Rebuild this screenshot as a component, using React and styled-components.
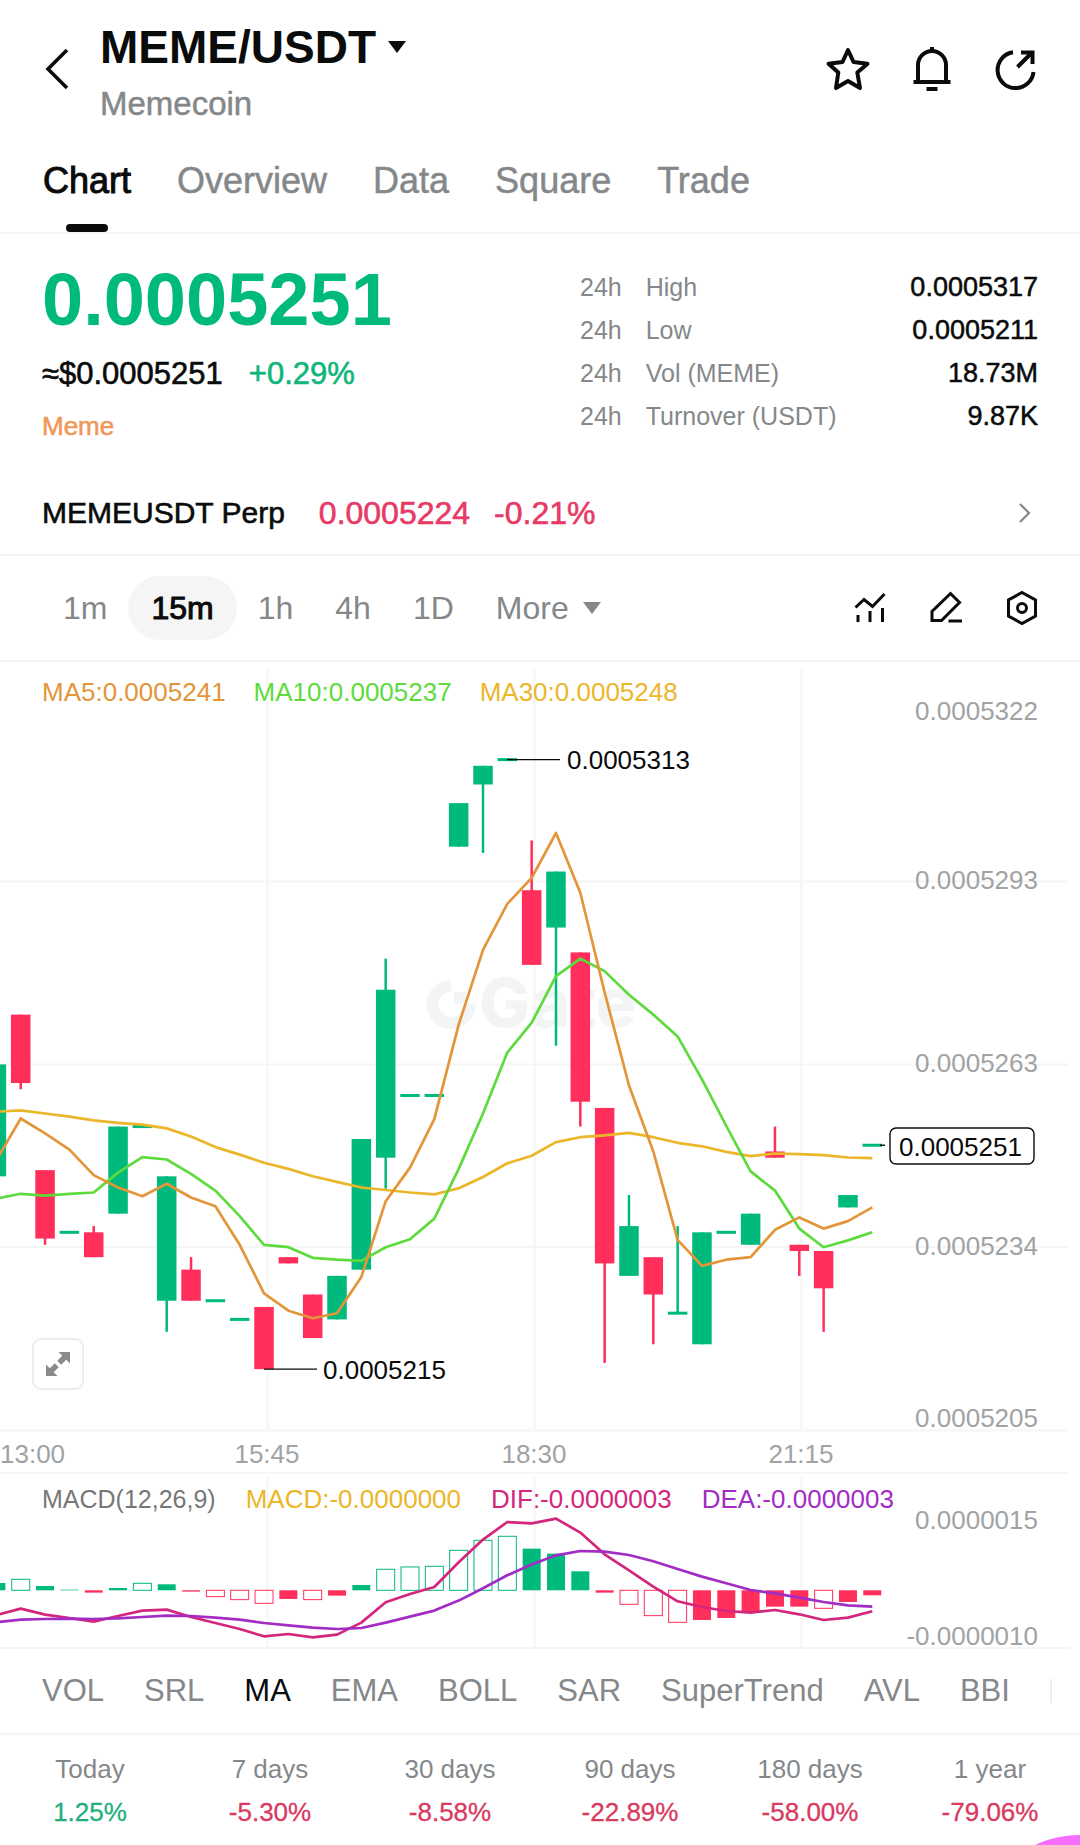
import React, { useState } from "react";
import styled, { createGlobalStyle } from "styled-components";

const GREEN = "#00b97c";
const RED = "#ff2e5b";
const INK = "#0a0b0b";
const GREY = "#84888a";
const AXIS = "#a0a3a5";
const LINE = "#f5f5f5";

const GlobalStyle = createGlobalStyle`
    * {
        box-sizing: border-box;
    }
    body {
        margin: 0;
        background: #fff;
        color: ${INK};
        font-family: "Liberation Sans", Arial, sans-serif;
        overflow-x: hidden;
    }
    button {
        border: 0;
        padding: 0;
        background: none;
        color: inherit;
        font: inherit;
        cursor: pointer;
    }
    svg {
        display: block;
    }
`

const Page = styled.main`
    position: relative;
    min-height: 100vh;
    overflow: hidden;
`

const Header = styled.header`
    display: flex;
    align-items: center;
    justify-content: space-between;
    height: 138px;
    padding: 0 40px 0 42px;
`

const Pair = styled.div`
    display: flex;
    align-items: center;
    gap: 30px;
`

const PairNames = styled.div`
    display: flex;
    flex-direction: column;
    align-items: flex-start;
    gap: 11px;
    padding-top: 7px;
`

const PairButton = styled.button`
    display: flex;
    align-items: center;
    gap: 12px;
    font-size: 46px;
    line-height: 52px;
    font-weight: 700;
`

const CoinName = styled.div`
    font-size: 33px;
    line-height: 40px;
    color: ${GREY};
    -webkit-text-stroke: 0.5px;
`

const Actions = styled.div`
    display: flex;
    align-items: center;
    gap: ${props => props.$gap || "36px"};
`

const TabBar = styled.nav`
    display: flex;
    gap: 46px;
    height: 96px;
    padding: 0 43px;
    border-bottom: 2px solid ${LINE};
`

const Tab = styled.button`
    position: relative;
    padding-bottom: 8px;
    font-size: 36px;
    color: ${props => props.$active ? INK : GREY};
    -webkit-text-stroke: ${props => props.$active ? "1px" : "0.5px"};

    &::after {
        content: "";
        display: ${props => props.$active ? "block" : "none"};
        position: absolute;
        left: 50%;
        bottom: 0;
        width: 42px;
        height: 8px;
        margin-left: -21px;
        border-radius: 4px;
        background: ${INK};
    }
`

const Quote = styled.section`
    display: flex;
    justify-content: space-between;
    padding: 30px 42px 0;
`

const Price = styled.div`
    font-size: 74px;
    line-height: 72px;
    font-weight: 700;
    color: ${GREEN};
`

const PriceSub = styled.div`
    display: flex;
    gap: 26px;
    margin-top: 20px;
    font-size: 31px;
    line-height: 36px;
    -webkit-text-stroke: 0.6px;
`

const Up = styled.span`
    color: #12b57c;
`

const Tag = styled.a`
    display: inline-block;
    margin-top: 18px;
    font-size: 26px;
    line-height: 32px;
    color: #f0985a;
    text-decoration: none;
    -webkit-text-stroke: 0.6px;
`

const Stats = styled.dl`
    width: 458px;
    margin: 2px 0 0;
`

const Stat = styled.div`
    display: flex;
    align-items: center;
    height: 43px;
    font-size: 25px;

    dt {
        display: flex;
        gap: 24px;
        color: ${GREY};
    }
    dd {
        margin: 0 0 0 auto;
        font-size: 27px;
        -webkit-text-stroke: 0.5px;
    }
`

const Perp = styled.a`
    display: flex;
    align-items: center;
    height: 86px;
    margin-top: 28px;
    padding: 2px 48px 0 42px;
    border-bottom: 2px solid ${LINE};
    font-size: 30px;
    color: ${INK};
    text-decoration: none;
    -webkit-text-stroke: 0.6px;

    svg {
        margin-left: auto;
    }
`

const PerpValue = styled.span`
    margin-left: ${props => props.$wide ? "34px" : "24px"};
    font-size: 32px;
    color: #e73a66;
`

const Toolbar = styled.div`
    display: flex;
    align-items: center;
    justify-content: space-between;
    height: 106px;
    padding: 0 42px;
    border-bottom: 2px solid ${LINE};
`

const Intervals = styled.div`
    display: flex;
    align-items: center;
`

const Interval = styled.button`
    display: flex;
    align-items: center;
    gap: 14px;
    height: 64px;
    padding: 0 ${props => props.$active ? "23px" : "21px"};
    border-radius: 32px;
    background: ${props => props.$active ? "#f5f5f5" : "none"};
    font-size: 32px;
    color: ${props => props.$active ? INK : GREY};
    -webkit-text-stroke: ${props => props.$active ? "1px" : "0"};
`

const Panel = styled.section`
    position: relative;

    > svg {
        width: 100%;
        height: auto;
        overflow: visible;
    }
    text {
        font-size: 26px;
    }
`

const Legend = styled.div`
    position: absolute;
    top: ${props => props.$top};
    left: 42px;
    display: flex;
    align-items: center;
    gap: ${props => props.$gap};
    font-size: 26px;
    line-height: 32px;
`

const LegendItem = styled.span`
    color: ${props => props.$color};
    font-size: ${props => props.$small ? "25px" : "26px"};
`

const ExpandButton = styled.button`
    position: absolute;
    left: 32px;
    bottom: 84px;
    display: grid;
    place-items: center;
    width: 52px;
    height: 52px;
    border: 2px solid #ededee;
    border-radius: 9px;
    background: #fff;
`

const IndicatorRow = styled.div`
    border-bottom: 2px solid ${LINE};
`

const IndicatorList = styled.div`
    display: flex;
    align-items: center;
    gap: 40px;
    height: 84px;
    margin-right: 24px;
    padding-left: 42px;
    overflow: hidden;
`

const Indicator = styled.button`
    flex: none;
    font-size: 31px;
    color: ${props => props.$active ? INK : GREY};
`

const ListEdge = styled.span`
    flex: none;
    width: 2px;
    height: 24px;
    background: #eceded;
`

const Returns = styled.table`
    width: 100%;
    margin-top: 13px;
    border-collapse: collapse;
    table-layout: fixed;
    font-size: 26px;

    th, td {
        height: 43px;
        padding: 0;
        text-align: center;
        font-weight: 400;
    }
    th {
        color: ${GREY};
    }
`

const ReturnCell = styled.td`
    color: ${props => props.$up ? "#1fb07c" : "#d93a60"};
    -webkit-text-stroke: 0.3px;
`

const Bubble = styled.button`
    position: fixed;
    right: -106px;
    bottom: -202px;
    width: 212px;
    height: 212px;
    border-radius: 50%;
    background: #f56cff;
`

const tabs = ["Chart", "Overview", "Data", "Square", "Trade"];

const stats = [
    ["High", "0.0005317"],
    ["Low", "0.0005211"],
    ["Vol (MEME)", "18.73M"],
    ["Turnover (USDT)", "9.87K"],
];

const intervals = ["1m", "15m", "1h", "4h", "1D"];

const indicators = ["VOL", "SRL", "MA", "EMA", "BOLL", "SAR", "SuperTrend", "AVL", "BBI"];

const returns = [
    ["Today", "1.25%"],
    ["7 days", "-5.30%"],
    ["30 days", "-8.58%"],
    ["90 days", "-22.89%"],
    ["180 days", "-58.00%"],
    ["1 year", "-79.06%"],
];

// open, close, high, low in units of 0.0000001 above 0.0005000
const candles = [
    [246, 264, 264, 246], [272, 261, 272, 260], [247, 236, 247, 235],
    [237, 237, 237, 237], [237, 233, 238, 233], [240, 254, 254, 240],
    [254, 254, 254, 254], [226, 246, 246, 221], [231, 226, 233, 226],
    [226, 226, 226, 226], [223, 223, 223, 223], [225, 215, 225, 215],
    [233, 232, 233, 232], [227, 220, 227, 220], [223, 230, 230, 223],
    [231, 252, 252, 231], [249, 276, 281, 244], [259, 259, 259, 259],
    [259, 259, 259, 259], [299, 306, 306, 299], [309, 312, 312, 298],
    [313, 313, 313, 313], [292, 280, 300, 280], [286, 295, 295, 267],
    [282, 258, 282, 254], [257, 232, 257, 216], [230, 238, 243, 230],
    [233, 227, 233, 219], [224, 224, 238, 224], [219, 237, 237, 219],
    [237, 237, 237, 237], [235, 240, 240, 235], [250, 249, 254, 249],
    [235, 234, 235, 230], [234, 228, 234, 221], [241, 243, 243, 241],
    [251, 251, 251, 251],
];

const closes = candles.map(c => c[1]);

function average(n) {
    return closes.slice(n - 1).map((_, i) => (
        closes.slice(i, i + n).reduce((a, b) => a + b, 0) / n
    ));
}

// the first values of each average depend on candles left of the window
const ma5 = [248.6, 255.3, 252.9, 250.3, ...average(5)];
const ma10 = [242.4, 243.2, 242.9, 243.2, 243.4, 246.6, 249.1, 248.7, 246.4, ...average(10)];
const ma30 = [
    256.4, 256.6, 256.1, 255.6, 255, 254.6, 254.3, 253.7, 252.4, 250.7,
    249.5, 248.2, 247.2, 246, 245.1, 244.2, 243.8, 243.4, 243.1, 244.1,
    245.9, 248.1, 249.3, 251.5, 252.3, 252.6, 253, 252.3, 251.4,
    ...average(30),
];

const macdBars = [
    22, 33, 13, 2, -7, 7, 21, 18, -4, -19, -28, -39, -26, -28, -16, 16, 63, 70, 72,
    120, 150, 162, 125, 110, 57, -7, -42, -76, -96, -89, -83, -67, -49, -49, -54, -35, -15,
];
const hollowBars = [1, 6, 9, 10, 11, 13, 16, 17, 18, 19, 20, 21, 26, 27, 28, 34];
const dif = [
    -74, -55, -73, -83, -94, -77, -61, -58, -80, -98, -116, -138, -131, -141, -133, -97, -36, -11, 10,
    84, 152, 205, 201, 215, 173, 108, 60, 11, -33, -50, -62, -67, -59, -72, -89, -82, -63,
];
const dea = [
    -96, -88, -86, -85, -86, -84, -80, -76, -77, -82, -88, -98, -105, -112, -116, -113, -97, -79, -61,
    -31, 6, 45, 77, 105, 118, 116, 106, 87, 64, 41, 21, 1, -9, -22, -35, -45, -49,
];

const xAt = i => -3.6 + i * 24.33;
const priceY = p => 97.6 + (313 - p) * 6.22;
const macdY = v => 116.3 - v / 3;
const points = (values, y) => values.map((v, i) => `${xAt(i).toFixed(1)},${y(v).toFixed(1)}`).join(" ");

const gridX = [267.5, 534.5, 801.5];

function Candle({ x, data }) {
    const [open, close, high, low] = data;
    const color = close >= open ? GREEN : RED;
    const top = priceY(Math.max(open, close));
    const height = Math.abs(open - close) * 6.22;

    return (
        <g fill={color}>
            {high !== low && (
                <rect x={x - 1.25} y={priceY(high)} width="2.5" height={priceY(low) - priceY(high)} />
            )}
            <rect x={x - 9.75} y={height ? top : top - 1.5} width="19.5" height={height || 3} />
        </g>
    )
}

function PriceChart() {
    const labels = [
        ["0.0005322", 58], ["0.0005293", 227], ["0.0005263", 410],
        ["0.0005234", 593], ["0.0005205", 765],
    ];

    return (
        <Panel>
            <svg viewBox="0 0 1080 812" role="img" aria-label="MEME/USDT 15 minute candles">
                <g stroke={LINE} strokeWidth="2">
                    {gridX.map(x => <line key={x} x1={x} x2={x} y1="6" y2="768" />)}
                    {[219.5, 402.5, 585, 768.5, 811].map(y => <line key={y} x1="0" x2="1069" y1={y} y2={y} />)}
                </g>
                <g fill="#f3f4f5">
                    <path d="M451 318A24.500 24.500 0 1 0 475.500 342H463.500A12.500 12.500 0 1 1 451 330Z" />
                    <path d="M454 330H466V342H454Z" />
                    <text x="479" y="365" style={{ font: "800 68px Inter, sans-serif" }}>Gate</text>
                </g>
                {candles.map((c, i) => <Candle key={i} x={xAt(i)} data={c} />)}
                <g fill="none" strokeWidth="2.7" strokeLinejoin="round">
                    <polyline points={points(ma30, priceY)} stroke="#ebb62a" />
                    <polyline points={points(ma10, priceY)} stroke="#5edb3c" />
                    <polyline points={points(ma5, priceY)} stroke="#e3953a" />
                </g>
                <g stroke={INK} strokeWidth="1.4">
                    <line x1="507" x2="560" y1={priceY(313)} y2={priceY(313)} />
                    <line x1="264" x2="317" y1={priceY(215)} y2={priceY(215)} />
                    <line x1="880" x2="885" y1={priceY(251)} y2={priceY(251)} />
                </g>
                <g fill={AXIS} textAnchor="end">
                    {labels.map(([text, y]) => <text key={text} x="1038" y={y}>{text}</text>)}
                </g>
                <g fill={INK}>
                    <text x="567" y="107">0.0005313</text>
                    <text x="323" y="717">0.0005215</text>
                    <rect x="890" y="466" width="144" height="36" rx="6" fill="#fff" stroke={INK} strokeWidth="1.4" />
                    <text x="899" y="494">0.0005251</text>
                </g>
                <g fill={AXIS} textAnchor="middle">
                    <text x="0" y="801" textAnchor="start">13:00</text>
                    <text x="267" y="801">15:45</text>
                    <text x="534" y="801">18:30</text>
                    <text x="801" y="801">21:15</text>
                </g>
            </svg>
            <Legend $top="14px" $gap="28px">
                <LegendItem $color="#e3953a">MA5:0.0005241</LegendItem>
                <LegendItem $color="#5edb3c">MA10:0.0005237</LegendItem>
                <LegendItem $color="#ebb62a">MA30:0.0005248</LegendItem>
            </Legend>
            <ExpandButton aria-label="Full screen">
                <svg width="26" height="26" viewBox="0 0 26 26" fill="#8a8a8a">
                    <path d="M13.500 1H25V12.500L21.200 8.700L16.200 13.700L12.300 9.800L17.300 4.800Z" />
                    <path d="M12.500 25H1V13.500L4.800 17.300L9.800 12.300L13.700 16.200L8.700 21.200Z" />
                </svg>
            </ExpandButton>
        </Panel>
    )
}

function MacdBar({ x, value, hollow }) {
    const color = value > 0 ? GREEN : RED;
    const y = Math.min(macdY(value), macdY(0));
    const height = Math.abs(value) / 3;

    if (hollow) {
        return <rect x={x - 9} y={y} width="18" height={height} fill="none" stroke={color} strokeWidth="1" />
    }
    return <rect x={x - 9} y={y} width="18" height={height} fill={color} />
}

function MacdChart() {
    return (
        <Panel>
            <svg viewBox="0 0 1080 175" role="img" aria-label="MACD">
                <g stroke={LINE} strokeWidth="2">
                    {gridX.map(x => <line key={x} x1={x} x2={x} y1="2" y2="174" />)}
                    <line x1="0" x2="1069" y1="174" y2="174" />
                </g>
                {macdBars.map((v, i) => (
                    <MacdBar key={i} x={xAt(i)} value={v} hollow={hollowBars.includes(i)} />
                ))}
                <g fill="none" strokeWidth="2.7" strokeLinejoin="round">
                    <polyline points={points(dif, macdY)} stroke="#d4267c" />
                    <polyline points={points(dea, macdY)} stroke="#a32cc4" />
                </g>
                <g fill={AXIS} textAnchor="end">
                    <text x="1038" y="55">0.0000015</text>
                    <text x="1038" y="171">-0.0000010</text>
                </g>
            </svg>
            <Legend $top="9px" $gap="30px">
                <LegendItem $color="#777" $small>MACD(12,26,9)</LegendItem>
                <LegendItem $color="#ebb62a">MACD:-0.0000000</LegendItem>
                <LegendItem $color="#d4267c">DIF:-0.0000003</LegendItem>
                <LegendItem $color="#a32cc4">DEA:-0.0000003</LegendItem>
            </Legend>
        </Panel>
    )
}

function HeaderActions() {
    return (
        <Actions>
            <button aria-label="Add to favourites">
                <svg width="48" height="48" viewBox="0 0 48 48" fill="none" stroke={INK} strokeWidth="4" strokeLinejoin="round">
                    <path d="M24 5L29.500 17L43.500 18.800L33.300 27.500L36 43L24 36L12 43L14.300 27.500L4.500 18.800L18.500 17Z" />
                </svg>
            </button>
            <button aria-label="Price alerts">
                <svg width="48" height="48" viewBox="0 0 48 48" fill="none" stroke={INK} strokeWidth="4">
                    <path d="M24 2V7M10 37V20a14 14 0 0 1 28 0V37M5.500 37H42.500M18.500 44H29.500" />
                </svg>
            </button>
            <button aria-label="Share">
                <svg width="48" height="48" viewBox="0 0 48 48" fill="none" stroke={INK} strokeWidth="4">
                    <path d="M21 7.300A18 18 0 1 0 41.500 27M25.500 22L40 7.500M29 7.500H40.500V19" />
                </svg>
            </button>
        </Actions>
    )
}

function ToolbarActions() {
    return (
        <Actions $gap="44px">
            <button aria-label="Indicators">
                <svg width="32" height="36" viewBox="0 0 32 36" fill="none" stroke={INK} strokeWidth="3">
                    <path d="M1.500 17.500L10 9.500L18.500 16.500L30.500 4M4 25V32M16 21V32M28.500 18V32" />
                </svg>
            </button>
            <button aria-label="Draw">
                <svg width="32" height="36" viewBox="0 0 32 36" fill="none" stroke={INK} strokeWidth="3">
                    <path d="M2 30.500V21.500L20.500 3.500L29.500 12.500L11.500 30.500ZM18.500 31H32" />
                </svg>
            </button>
            <button aria-label="Chart settings">
                <svg width="32" height="36" viewBox="0 0 32 36" fill="none" stroke={INK} strokeWidth="3">
                    <path d="M16 2.500L29.500 10V26L16 33.500L2.500 26V10Z" />
                    <circle cx="16" cy="18" r="4.500" />
                </svg>
            </button>
        </Actions>
    )
}

export default function App() {
    const [tab, setTab] = useState("Chart");
    const [interval, setInterval] = useState("15m");
    const [indicator, setIndicator] = useState("MA");

    return (
        <Page>
            <GlobalStyle />
            <Header>
                <Pair>
                    <button aria-label="Back">
                        <svg width="28" height="44" viewBox="0 0 28 44" fill="none" stroke={INK} strokeWidth="3.6">
                            <path d="M25 3L6 22L25 41" />
                        </svg>
                    </button>
                    <PairNames>
                        <PairButton>
                            MEME/USDT
                            <svg width="18" height="12" viewBox="0 0 18 12" fill={INK}>
                                <path d="M0 0H18L9 12Z" />
                            </svg>
                        </PairButton>
                        <CoinName>Memecoin</CoinName>
                    </PairNames>
                </Pair>
                <HeaderActions />
            </Header>
            <TabBar>
                {tabs.map(name => (
                    <Tab key={name} $active={name === tab} onClick={() => setTab(name)}>{name}</Tab>
                ))}
            </TabBar>
            <Quote>
                <div>
                    <Price>0.0005251</Price>
                    <PriceSub>
                        <span>≈$0.0005251</span>
                        <Up>+0.29%</Up>
                    </PriceSub>
                    <Tag href="#meme">Meme</Tag>
                </div>
                <Stats>
                    {stats.map(([label, value]) => (
                        <Stat key={label}>
                            <dt><span>24h</span><span>{label}</span></dt>
                            <dd>{value}</dd>
                        </Stat>
                    ))}
                </Stats>
            </Quote>
            <Perp href="#perp">
                MEMEUSDT Perp
                <PerpValue $wide>0.0005224</PerpValue>
                <PerpValue>-0.21%</PerpValue>
                <svg width="14" height="22" viewBox="0 0 14 22" fill="none" stroke={GREY} strokeWidth="2.200">
                    <path d="M2 2L11 11L2 20" />
                </svg>
            </Perp>
            <Toolbar>
                <Intervals>
                    {intervals.map(name => (
                        <Interval key={name} $active={name === interval} onClick={() => setInterval(name)}>{name}</Interval>
                    ))}
                    <Interval>
                        More
                        <svg width="18" height="12" viewBox="0 0 18 12" fill={GREY}>
                            <path d="M0 0H18L9 12Z" />
                        </svg>
                    </Interval>
                </Intervals>
                <ToolbarActions />
            </Toolbar>
            <PriceChart />
            <MacdChart />
            <IndicatorRow>
                <IndicatorList>
                    {indicators.map(name => (
                        <Indicator key={name} $active={name === indicator} onClick={() => setIndicator(name)}>{name}</Indicator>
                    ))}
                    <ListEdge />
                </IndicatorList>
            </IndicatorRow>
            <Returns>
                <thead>
                    <tr>{returns.map(([period]) => <th key={period} scope="col">{period}</th>)}</tr>
                </thead>
                <tbody>
                    <tr>
                        {returns.map(([period, value]) => (
                            <ReturnCell key={period} $up={value[0] !== "-"}>{value}</ReturnCell>
                        ))}
                    </tr>
                </tbody>
            </Returns>
            <Bubble aria-label="Assistant" />
        </Page>
    )
}
